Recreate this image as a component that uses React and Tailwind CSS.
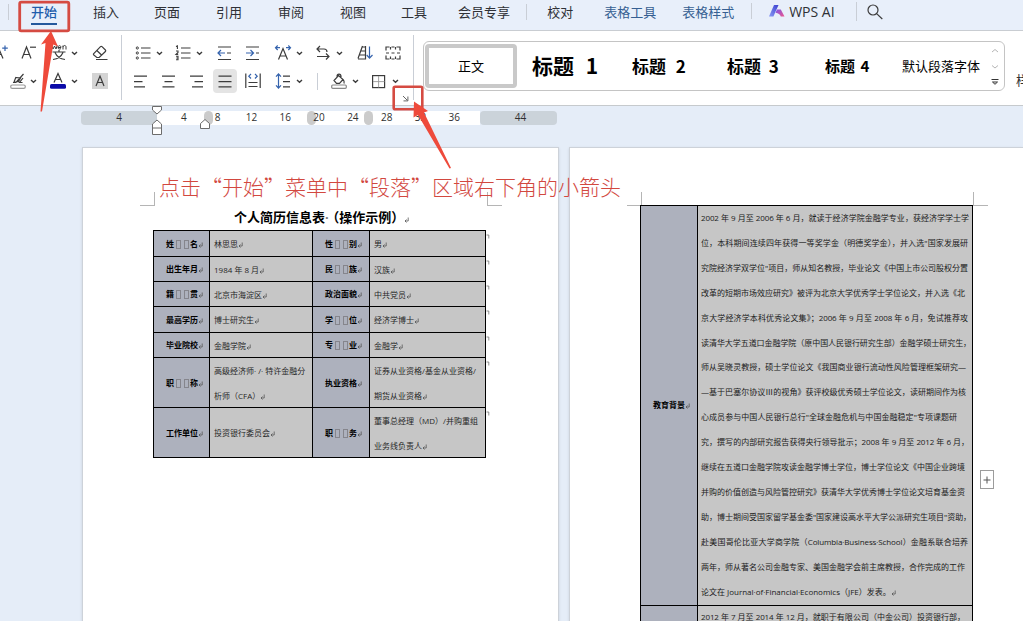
import React from 'react';

const Icon = ({ className = '', children }) => (
  <svg viewBox="0 0 16 16" className={`h-4 w-4 shrink-0 overflow-visible ${className}`} fill="none" stroke="#3c3c3c" strokeWidth="1.2">
    {children}
  </svg>
);

const Chevron = ({ className = '' }) => (
  <svg viewBox="0 0 7 16" className={`h-4 w-[7px] shrink-0 ${className}`} fill="none" stroke="#3c3c3c" strokeWidth="1.4">
    <path d="M1 7 L3.5 9.3 L6 7" />
  </svg>
);

const Launcher = ({ className }) => (
  <svg viewBox="0 0 7 7" className={`absolute h-[7px] w-[7px] ${className}`} fill="none" stroke="#666" strokeWidth="1">
    <path d="M1 1 L5.5 5.5 M5.9 1.5 V5.9 H1.5" />
  </svg>
);

const Separator = ({ className }) => <div className={`w-px shrink-0 bg-[#c9ced6] ${className}`} />;

const Tab = ({ className = '', children }) => (
  <span className={`shrink-0 whitespace-nowrap text-[13px] leading-[18px] ${className}`}>{children}</span>
);

function MenuBar() {
  return (
    <div className="relative flex h-[31px] shrink-0 items-start border-b border-[#c9cdd2] bg-[#e8effa] pt-[3px] text-[#2f3136]">
      <Separator className="ml-2 mt-px h-4" />
      <Tab className="ml-[22px] h-[22px] border-b-2 border-[#24589c] font-medium text-[#1f5dab]">开始</Tab>
      <Tab className="ml-9">插入</Tab>
      <Tab className="ml-[35px]">页面</Tab>
      <Tab className="ml-9">引用</Tab>
      <Tab className="ml-9">审阅</Tab>
      <Tab className="ml-9">视图</Tab>
      <Tab className="ml-[35px]">工具</Tab>
      <Tab className="ml-[31px]">会员专享</Tab>
      <Separator className="ml-4 mt-px h-4" />
      <Tab className="ml-5">校对</Tab>
      <Tab className="ml-[31px] text-[#365f92]">表格工具</Tab>
      <Tab className="ml-[26px] text-[#365f92]">表格样式</Tab>
      <Separator className="ml-[17px] h-4" />
      <svg viewBox="0 0 16 13" className="ml-[17px] mt-[2px] h-[13px] w-4 shrink-0">
        <defs>
          <linearGradient id="wpsLeft" x1="0" y1="1" x2="1" y2="0">
            <stop offset="0" stopColor="#8a9af4" />
            <stop offset="1" stopColor="#3a3fd0" />
          </linearGradient>
          <linearGradient id="wpsRight" x1="0" y1="0" x2="1" y2="1">
            <stop offset="0" stopColor="#7b55e8" />
            <stop offset="1" stopColor="#f0568c" />
          </linearGradient>
        </defs>
        <path d="M5 0 H9.5 L4.4 11.5 H0 Z" fill="url(#wpsLeft)" />
        <path d="M8 4.5 H11.8 L15.5 11.5 H11.8 C11 9.500 9.500 8.200 6.500 7.800 Z" fill="url(#wpsRight)" />
      </svg>
      <span className="ml-1 w-[46px] shrink-0 whitespace-nowrap font-['Open_Sans'] text-[14px] leading-[18px]">WPS AI</span>
      <Separator className="ml-[21px] mt-[-1px] h-[19px]" />
      <svg viewBox="0 0 16 16" className="ml-[10px] mt-px h-4 w-4 shrink-0" fill="none" stroke="#3c3c3c" strokeWidth="1.2">
        <circle cx="6" cy="6" r="5" />
        <path d="M9.6 9.6 L15.3 15" />
      </svg>
    </div>
  );
}

function FontGroup() {
  return (
    <div className="relative flex w-[121px] shrink-0 flex-col gap-3 overflow-hidden pt-[14px]">
      <div className="flex">
        <Icon className="-ml-2">
          <path d="M1 13.5 L6 2 L11 13.5 M3 9.5 H9" />
          <path d="M13 0.5 V6 M10.2 3.2 H15.8" stroke="#3563ad" />
        </Icon>
        <Icon className="ml-[13px]">
          <path d="M1 13.5 L5.5 2 L10 13.5 M2.6 9.5 H8.4" />
          <path d="M9 2.2 H15" />
        </Icon>
        <Icon className="ml-[14px]">
          <path d="M0.5 0.5 L2 4 L3.5 1 L5 4 L6.2 0.5 M7 2.5 H10 C10 0 7 0 7 2.5 C7 4.5 9 4.2 10 3.6 M12 4.5 V0.5 M12 2 C12.5 0 15 0 15 2 V4.5" strokeWidth="1" />
          <path d="M1.5 7 H14.5 M8 5 V7 M4 7.5 C6 12 10 14 14 14.5 M12 7.5 C10 12 6 14 2 14.5" />
        </Icon>
        <Chevron className="ml-1" />
        <Icon className="ml-[14px]">
          <path d="M1.5 8.8 L8.5 1.7 C9 1.2 9.5 1.2 10 1.7 L13.4 5 C13.9 5.5 13.9 6 13.4 6.5 L7.2 12.5 H4.8 L1.5 9.8 Z M4.8 5.5 L9.8 10.2 M4 14.5 H15.5" />
        </Icon>
      </div>
      <div className="flex">
        <Icon className="ml-[10px]">
          <path d="M3 9.5 L6 9.5 L13.5 1 M6 4 L4 9 M6 4.5 L10.5 5 L8.5 8.5 L3 9.5 M13 5 L9.5 9.5 H12.5" />
          <rect x="0.7" y="12" width="14.6" height="3.3" rx="1.6" stroke="#999" />
        </Icon>
        <Chevron className="ml-1" />
        <Icon className="ml-[13px]">
          <path d="M4 9.5 L8 0.5 L12 9.5 M5.5 6.5 H10.5" />
          <rect x="0" y="11" width="16" height="4.7" rx="1.5" fill="#0a0aa8" stroke="none" />
        </Icon>
        <Chevron className="ml-[5px]" />
        <Icon className="ml-[14px]">
          <rect x="0" y="0" width="16" height="16" fill="#d4d4d4" stroke="none" />
          <path d="M4 13 L8 3 L12 13 M5.4 9.5 H10.6" />
        </Icon>
      </div>
      <Launcher className="right-[5px] top-[65px]" />
    </div>
  );
}

function ParagraphGroup() {
  return (
    <div className="relative flex w-[291px] shrink-0 flex-col gap-3 pt-[14px]">
      <div className="flex">
        <Icon className="ml-[13px]">
          <path d="M6 3 H15.5 M6 8 H15.5 M6 13 H15.5" />
          <g strokeWidth="1">
            <circle cx="2.3" cy="3" r="1.1" />
            <circle cx="2.3" cy="8" r="1.1" />
            <circle cx="2.3" cy="13" r="1.1" />
          </g>
        </Icon>
        <Chevron className="ml-[5px]" />
        <Icon className="ml-3">
          <path d="M6 3 H15.5 M6 8 H15.5 M6 13 H15.5" />
          <path d="M1 1.4 L2.4 0.8 V4 M1 6 H3 V7.5 L1 9.4 H3.2 M1 11.3 H3 V14.7 H1 M1.3 13 H3" strokeWidth="1.1" />
        </Icon>
        <Chevron className="ml-[5px]" />
        <Icon className="ml-[14px]">
          <path d="M1 2 H14 M10 8 H14 M1 14.5 H14" />
          <path d="M1 8 H8 M4 5 L1 8 L4 11" stroke="#3563ad" />
        </Icon>
        <Icon className="ml-3">
          <path d="M1 2 H14 M11 8 H14 M1 14.5 H14" />
          <path d="M1 8 H8.5 M5.5 5 L8.5 8 L5.5 11" stroke="#3563ad" />
        </Icon>
        <Icon className="ml-[14px]">
          <path d="M3.5 14.5 L8 3.5 L12.5 14.5 M5 11 H11" />
          <path d="M0.5 2.7 H5 M2.7 0.5 L0.5 2.7 L2.7 5 M11 2.7 H15.5 M13.3 0.5 L15.5 2.7 L13.3 5" stroke="#3563ad" />
        </Icon>
        <Chevron className="ml-[5px]" />
        <Icon className="ml-3">
          <path d="M5 1 L2 4 L5 7 M2 4 H9 C11 4 12 5 12 7 M2 11.5 H14 M11 8.5 L14 11.5 L11 14.5" />
        </Icon>
        <Chevron className="ml-[5px]" />
        <Icon className="ml-[14px]">
          <path d="M5.5 1 L1 13.5 M5 2 H8.5 M8.5 1 V14.5 M3.7 6 H8.5 M2 10 H8.5 M1 14 H8.5" />
          <path d="M12.5 1.5 V13 M9.7 10 L12.5 13.2 L15.5 10" stroke="#3563ad" />
        </Icon>
        <Icon className="ml-3">
          <path d="M4.500 2 H1 V5.500 M11.500 2 H15 V5.500 M4.500 14 H1 V10.500 M11.500 14 H15 V10.500 M6.500 2 H9.500 M6.500 14 H9.500 M1 8 H4 M6.500 8 H9.500 M12 8 H15 M5.500 2 V4.500 M10.500 2 V4.500 M5.500 11.500 V14 M10.500 11.500 V14" />
        </Icon>
      </div>
      <div className="flex">
        <Icon className="ml-[11px]">
          <path d="M1 3.2 H14 M1 8.6 H9.5 M1 13.8 H12" />
        </Icon>
        <Icon className="ml-3">
          <path d="M1 3.2 H14 M3.5 8.6 H11.5 M1.5 13.8 H13.5" />
        </Icon>
        <Icon className="ml-3">
          <path d="M1 3.2 H14 M5.5 8.6 H14 M3 13.8 H14" />
        </Icon>
        <div className="-my-1 ml-2 flex h-6 w-6 shrink-0 items-center justify-center rounded bg-[#e4e4e4]">
          <Icon className="-ml-px">
            <path d="M1.5 3.2 H14.5 M1.5 8.6 H14.5 M1.5 13.8 H14.5" />
          </Icon>
        </div>
        <Icon className="ml-2">
          <path d="M0.8 0.5 V15 M15.2 0.5 V15 M3.5 9.5 H12.5 M3.5 13.5 H12.5" />
          <path d="M6 1 L3.8 3.2 L6 5.5 M10 1 L12.2 3.2 L10 5.5" stroke="#3563ad" />
        </Icon>
        <Icon className="ml-[14px]">
          <path d="M8 3.2 H15 M8 8.6 H15 M8 13.8 H15" />
          <path d="M3.5 1 V15 M1 3.7 L3.5 1 L6 3.7 M1 12.3 L3.5 15 L6 12.3" stroke="#3563ad" />
        </Icon>
        <Chevron className="ml-[5px]" />
        <Separator className="ml-[14px] h-[17px]" />
        <Icon className="ml-[13px]">
          <path d="M6 3.500 C6 0.300 10 0.300 10 3.500 V5 M7.500 2.500 L12 6.500 L8.500 10.300 H5.500 L3 7.500 Z M12 6.500 C13.500 8 13.500 9 13 10.500" />
          <rect x="0.7" y="12" width="14.6" height="3.3" rx="1" stroke="#888" />
        </Icon>
        <Chevron className="ml-[5px]" />
        <Icon className="ml-3">
          <rect x="1.6" y="2.6" width="12" height="12" />
          <path d="M7.6 3 V14.5 M2 8.6 H13.5" stroke="#999" strokeWidth="0.9" />
        </Icon>
        <Chevron className="ml-[5px]" />
      </div>
      <Launcher className="right-[4px] top-[64px]" />
    </div>
  );
}

function StyleGallery() {
  return (
    <div className="ml-[9px] mt-[10px] flex h-[50px] w-[582px] shrink-0 items-center rounded-md border border-[#c4c4c4] bg-white text-black">
      <div className="ml-px flex h-[44px] w-[92px] shrink-0 items-center justify-center rounded border-4 border-[#c9c9c9] text-[13px]">正文</div>
      <div className="ml-[15px] w-[68px] shrink-0 whitespace-nowrap text-[21px] font-bold [word-spacing:7px]">标题 1</div>
      <div className="ml-[32px] w-[54px] shrink-0 whitespace-nowrap text-[17px] font-bold [word-spacing:6px]">标题 2</div>
      <div className="ml-[41px] w-[51px] shrink-0 whitespace-nowrap text-[17px] font-bold [word-spacing:4px]">标题 3</div>
      <div className="ml-[47px] w-[46px] shrink-0 whitespace-nowrap text-[15px] font-bold [word-spacing:2px]">标题 4</div>
      <div className="ml-[31px] w-[80px] shrink-0 whitespace-nowrap text-[13px]">默认段落字体</div>
      <svg viewBox="0 0 8 38" className="ml-[9px] h-[38px] w-2 shrink-0" fill="none" stroke="#b5b5b5">
        <path d="M1 5 L4 2.5 L7 5 M1 18.5 L4 21 L7 18.5" />
        <path d="M0.5 32.500 H7.500 M1.500 35 L4 37.300 L6.500 35 Z" stroke="#333" />
      </svg>
    </div>
  );
}

function Ribbon() {
  return (
    <div className="flex h-[75px] shrink-0 items-start overflow-hidden border-b border-[#c6cacd] bg-white">
      <FontGroup />
      <Separator className="mt-1 h-[65px]" />
      <ParagraphGroup />
      <Separator className="mt-1 h-[65px]" />
      <StyleGallery />
      <span className="ml-[11px] mt-10 shrink-0 text-[13px] leading-[18px] text-[#333]">样</span>
    </div>
  );
}

const Blob = ({ className }) => <div className={`absolute top-0 h-[14px] w-[9px] rounded-full bg-[#cbcbcb] ${className}`} />;

function Ruler() {
  return (
    <div className="relative ml-[81px] mt-[5px] flex h-[14px] w-[476px] shrink-0 rounded font-['Open_Sans'] text-[10px] leading-[13px] text-[#303030]">
      <div className="w-[76px] rounded-l bg-[#cbd3da] text-center">4</div>
      <div className="flex w-[323px] bg-white pl-[10px]">
        {[4, 8, 12, 16, 20, 24, 28, 32, 36].map((n) => (
          <span key={n} className="relative z-10 w-[33.8px] shrink-0 text-center">{n}</span>
        ))}
      </div>
      <div className="w-[77px] rounded bg-[#cbd3da] pl-1 text-center">44</div>
      <Blob className="left-[123px]" />
      <Blob className="left-[226px]" />
      <Blob className="left-[283px]" />
      <svg viewBox="0 0 60 32" className="absolute -top-[6px] left-[70px] z-20 h-8 w-[60px]" fill="#fff" stroke="#6c6c6c">
        <path d="M1.5 1.5 H10.5 V5 L6 9 L1.5 5 Z" />
        <path d="M6 15 L10.5 19 V29.5 H1.5 V19 Z M1.5 23 H10.5" />
        <path d="M54 14.5 L58.5 18.5 V23.5 H49.5 V18.5 Z" />
      </svg>
    </div>
  );
}

const Return = () => (
  <svg viewBox="0 0 5 6" className="inline-block h-[6px] w-[5px] align-[-1px]" fill="none" stroke="#555" strokeWidth="0.8">
    <path d="M4.2 0.5 V4 H1 M2.5 2.5 L1 4 L2.5 5.5" />
  </svg>
);

const Gap = () => (
  <>
    <i className="mx-[1.5px] inline-block h-[9px] w-[5px] border border-[#85858c] align-[-2px]" />
    <i className="mx-[1.5px] inline-block h-[9px] w-[5px] border border-[#85858c] align-[-2px]" />
  </>
);

const Label = ({ text }) => (
  <div className="flex items-center border-b border-r border-black bg-[#adb1bd] pl-3 font-bold">
    <span className="whitespace-nowrap">
      {text.length === 2 ? (<>{text[0]}<Gap />{text[1]}</>) : text}
      <Return />
    </span>
  </div>
);

const Value = ({ lines, end }) => (
  <div className="relative flex flex-col justify-center border-b border-r border-black bg-[#c6c6c6] pl-1 leading-[25px] text-[#262626]">
    {lines.map((line, i) => (
      <span key={line} className="whitespace-nowrap">
        {line}
        {i === lines.length - 1 && <Return />}
      </span>
    ))}
    {end && (
      <svg viewBox="0 0 4 5" className="absolute -right-[5px] top-[3px] h-[5px] w-1" fill="none" stroke="#777" strokeWidth="0.8">
        <path d="M0.5 1 H2.8 V4.5" />
      </svg>
    )}
  </div>
);

const resume = [
  ['姓名', ['林思思'], '性别', ['男']],
  ['出生年月', ['1984 年 8 月'], '民族', ['汉族']],
  ['籍贯', ['北京市海淀区'], '政治面貌', ['中共党员']],
  ['最高学历', ['博士研究生'], '学位', ['经济学博士']],
  ['毕业院校', ['金融学院'], '专业', ['金融学']],
  ['职称', ['高级经济师· /· 特许金融分', '析师（CFA）'], '执业资格', ['证券从业资格/基金从业资格/', '期货从业资格']],
  ['工作单位', ['投资银行委员会'], '职务', ['董事总经理（MD）/并购重组', '业务线负责人']],
];

const CropMarks = () => (
  <div className="flex h-[14px] justify-between">
    <div className="w-[15px] border-b border-r border-[#b5b5b5]" />
    <div className="w-[15px] border-b border-l border-[#b5b5b5]" />
  </div>
);

function FirstPage() {
  return (
    <div className="h-[480px] w-[477px] shrink-0 border border-[#cdd2d9] bg-white pt-[44px] shadow-sm">
      <div className="ml-[57px] w-[362px]">
        <CropMarks />
      </div>
      <div className="ml-[151px] flex h-[24px] items-center whitespace-nowrap text-[13px] font-bold text-black">
        <span className="-mt-px">个人简历信息表<span className="mr-1 font-['Open_Sans'] text-[#777]">·</span>（操作示例）<Return /></span>
      </div>
      <div className="ml-[70px] grid w-[333px] grid-cols-[56px_103px_57px_116px] grid-rows-[26px_25px_25px_26px_25px_50px_50px] border-l border-t border-black font-['Open_Sans','Noto_Sans_CJK_SC',sans-serif] text-[8px] leading-[12px] text-black">
        {resume.map(([a, b, c, d]) => (
          <React.Fragment key={a}>
            <Label text={a} />
            <Value lines={b} />
            <Label text={c} />
            <Value lines={d} end />
          </React.Fragment>
        ))}
      </div>
    </div>
  );
}

const education = [
  ['2002 年 9 月至 2006 年 6 月，就读于经济学院金融学专业，获经济学学士学', 'w-[268px]'],
  ['位，本科期间连续四年获得一等奖学金（明德奖学金），并入选"国家发展研', 'w-[267px]'],
  ['究院经济学双学位"项目，师从知名教授，毕业论文《中国上市公司股权分置', 'w-[267px]'],
  ['改革的短期市场效应研究》被评为北京大学优秀学士学位论文，并入选《北', 'w-[264px]'],
  ['京大学经济学本科优秀论文集》；2006 年 9 月至 2008 年 6 月，免试推荐攻', 'w-[267px]'],
  ['读清华大学五道口金融学院（原中国人民银行研究生部）金融学硕士研究生，', 'w-[270px]'],
  ['师从吴晓灵教授，硕士学位论文《我国商业银行流动性风险管理框架研究—', 'w-[265px]'],
  ['—基于巴塞尔协议Ⅲ的视角》获评校级优秀硕士学位论文，读研期间作为核', 'w-[265px]'],
  ['心成员参与中国人民银行总行"全球金融危机与中国金融稳定"专项课题研', 'w-[256px]'],
  ['究，撰写的内部研究报告获得央行领导批示；2008 年 9 月至 2012 年 6 月，', 'w-[268px]'],
  ['继续在五道口金融学院攻读金融学博士学位，博士学位论文《中国企业跨境', 'w-[264px]'],
  ['并购的价值创造与风险管控研究》获清华大学优秀博士学位论文培育基金资', 'w-[264px]'],
  ['助，博士期间受国家留学基金委"国家建设高水平大学公派研究生项目"资助，', 'w-[270px]'],
  ['赴美国哥伦比亚大学商学院（Columbia·Business·School）金融系联合培养', 'w-[267px]'],
  ['两年，师从著名公司金融专家、美国金融学会前主席教授，合作完成的工作', 'w-[264px]'],
];

const lineClass = "block whitespace-nowrap tracking-[-0.12px] [text-align:justify] [text-align-last:justify] [text-justify:inter-character]";

function SecondPage() {
  return (
    <div className="ml-[10px] h-[480px] w-[454px] shrink-0 border-l border-t border-[#cdd2d9] bg-white pt-[44px] shadow-sm">
      <div className="ml-[57px] w-[361px]">
        <CropMarks />
      </div>
      <div className="-mt-px flex items-start">
        <div className="ml-[70px] grid w-[333px] shrink-0 grid-cols-[57px_275px] grid-rows-[400px_25px] border-l border-t border-black font-['Open_Sans','Noto_Sans_CJK_SC',sans-serif] text-[8px] leading-[24.9px] text-[#202020]">
          <div className="flex items-center border-b border-r border-black bg-[#adb1bd] pl-3 font-bold text-black">
            <span className="whitespace-nowrap">教育背景<Return /></span>
          </div>
          <div className="border-b border-r border-black bg-[#c6c6c6] pl-[3px]">
            {education.map(([line, width]) => (
              <span key={line} className={`${lineClass} ${width}`}>{line}</span>
            ))}
            <span className="block whitespace-nowrap">
              论文在 Journal·of·Financial·Economics（JFE）发表。<Return />
            </span>
          </div>
          <div className="border-r border-black bg-[#adb1bd]" />
          <div className="border-r border-black bg-[#c6c6c6] pl-[3px]">
            <span className={`${lineClass} w-[264px] leading-[22px]`}>2012 年 7 月至 2014 年 12 月，就职于有限公司（中金公司）投资银行部，</span>
          </div>
        </div>
        <div className="ml-[7px] mt-[265px] flex h-[19px] w-[14px] items-center justify-center border border-[#9c9c9c]">
          <svg viewBox="0 0 8 8" className="h-2 w-2" stroke="#555">
            <path d="M4 0.5 V7.5 M0.5 4 H7.5" />
          </svg>
        </div>
      </div>
    </div>
  );
}

function Callouts() {
  return (
    <div className="pointer-events-none absolute inset-0 z-30">
      <svg viewBox="0 0 1023 621" className="absolute inset-0 h-full w-full" fill="none">
        <rect x="19.7" y="2.2" width="49.1" height="28.6" rx="1.5" stroke="#d54b42" strokeWidth="2.8" />
        <path d="M51 31 L58 46.500 L53.300 44.500 L42 111.500 L40.500 111.500 L45.500 43 L41 44.500 Z" fill="#ee4a3b" />
        <rect x="393.700" y="86.700" width="28.600" height="22.600" rx="1.5" stroke="#d54b42" strokeWidth="2.6" />
        <path d="M414 101.500 L428 111 L424 112.500 L451 168 L449.500 168.500 L418 115 L413.500 117.500 Z" fill="#ee4a3b" />
      </svg>
      <p className="absolute left-[159px] top-[171px] whitespace-nowrap text-[21px] font-light leading-[30px] text-[#d2483f]">
        点击“开始”菜单中“段落”区域右下角的小箭头
      </p>
    </div>
  );
}

export default function App() {
  return (
    <div lang="zh-CN" className="relative flex h-[621px] w-[1023px] flex-col overflow-hidden bg-[#e5edf8] font-['Noto_Sans_CJK_SC',sans-serif]">
      <MenuBar />
      <Ribbon />
      <Ruler />
      <div className="mt-[22px] flex shrink-0 pl-[82px]">
        <FirstPage />
        <SecondPage />
      </div>
      <Callouts />
    </div>
  );
}
